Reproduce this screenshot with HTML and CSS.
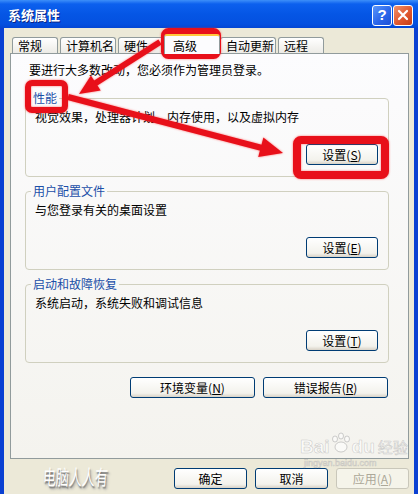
FILE: index.html
```html
<!DOCTYPE html>
<html>
    <head>
        <title>系统属性</title>
        <link rel="stylesheet" href="styles.css">
    </head>
    <body>
        <div class="window">
            <div class="titlebar">
                <span class="title">系统属性</span>
                <div class="capBtns">
                    <span class="capBtn helpBtn">?</span>
                    <span class="capBtn closeBtn">
                        <svg width="12" height="12" viewBox="0 0 12 12"><path d="M2 2L10 10M10 2L2 10" stroke="#fff" stroke-width="2.2" stroke-linecap="round"/></svg>
                    </span>
                </div>
            </div>

            <div class="frame">
                <div class="tabs">
                    <span class="tab">常规</span>
                    <span class="tab">计算机名</span>
                    <span class="tab">硬件</span>
                    <span class="tab active">高级</span>
                    <span class="tab">自动更新</span>
                    <span class="tab">远程</span>
                </div>

                <div class="panel">
                    <p class="note">要进行大多数改动，您必须作为管理员登录。</p>

                    <fieldset class="group">
                        <legend>性能</legend>
                        <p>视觉效果，处理器计划，内存使用，以及虚拟内存</p>
                        <div class="btnRow"><button class="btn">设置(<u>S</u>)</button></div>
                    </fieldset>

                    <fieldset class="group">
                        <legend>用户配置文件</legend>
                        <p>与您登录有关的桌面设置</p>
                        <div class="btnRow"><button class="btn">设置(<u>E</u>)</button></div>
                    </fieldset>

                    <fieldset class="group">
                        <legend>启动和故障恢复</legend>
                        <p>系统启动，系统失败和调试信息</p>
                        <div class="btnRow"><button class="btn">设置(<u>T</u>)</button></div>
                    </fieldset>

                    <div class="envRow">
                        <button class="btn wideBtn">环境变量(<u>N</u>)</button>
                        <button class="btn wideBtn">错误报告(<u>R</u>)</button>
                    </div>
                </div>

                <div class="footer">
                    <span class="brand">电脑人人有</span>
                    <button class="btn footBtn">确定</button>
                    <button class="btn footBtn">取消</button>
                    <button class="btn footBtn" disabled>应用(<u>A</u>)</button>
                </div>
            </div>

            <!-- red marks drawn on top of the screenshot -->
            <svg class="marks" width="418" height="494" viewBox="0 0 418 494">
                <g fill="none" stroke="#e8101a" stroke-linejoin="round">
                    <rect x="164.5" y="31.5" width="53" height="24" rx="4" stroke-width="7"/>
                    <rect x="28" y="83" width="37" height="27" rx="4" stroke-width="6"/>
                    <rect x="297" y="140" width="88" height="35" rx="4" stroke-width="8"/>
                    <line x1="160" y1="42" x2="95" y2="83.5" stroke-width="6"/>
                    <line x1="68" y1="97" x2="262" y2="148" stroke-width="6"/>
                </g>
                <g fill="#e8101a">
                    <polygon points="79,94 100.7,90.6 90.9,75.6"/>
                    <polygon points="283,153 258.2,157 263.4,137.6"/>
                </g>
            </svg>

            <div class="baidu">
                <div class="baiduLogo">
                    <span>Bai</span>
                    <svg width="22" height="24" viewBox="0 0 22 24">
                        <g fill="rgba(255,255,255,0.55)" stroke="rgba(160,160,160,0.5)">
                            <ellipse cx="5" cy="7" rx="2.5" ry="3"/>
                            <ellipse cx="11" cy="4" rx="2.5" ry="3"/>
                            <ellipse cx="17" cy="7" rx="2.5" ry="3"/>
                            <ellipse cx="11" cy="15" rx="6" ry="5"/>
                        </g>
                    </svg>
                    <span>du</span>
                    <span class="jy">经验</span>
                </div>
                <div class="baiduUrl">jingyan.baidu.com</div>
            </div>
        </div>
    </body>
</html>
```

FILE: styles.css
```css
body{
    margin:0;
    font-family:"Noto Sans CJK SC","Noto Sans",sans-serif;
    font-size:12px;
    line-height:16px;
    color:#000;
}
.window{
    position:relative;
    width:418px;
    height:494px;
    overflow:hidden;
    background:#0a40d2;
    display:flex;
    flex-direction:column;
}
.titlebar{
    height:28px;
    flex:none;
    display:flex;
    align-items:center;
    padding:0 5px 0 8px;
    background:linear-gradient(#3d8ff9 0, #0c60ee 4px, #0556e5 50%, #0450e0 85%, #0346d4 100%);
}
.title{
    flex:1;
    color:#fff;
    font-weight:bold;
    font-size:13px;
    text-shadow:1px 1px #0a2384;
    padding-top:1px;
}
.capBtns{
    display:flex;
    gap:1px;
    margin-top:2px;
}
.capBtn{
    width:20px;
    height:21px;
    box-sizing:border-box;
    border:1px solid #fff;
    border-radius:3px;
    display:flex;
    align-items:center;
    justify-content:center;
    color:#fff;
    font-family:"Liberation Sans",sans-serif;
    font-weight:bold;
    font-size:15px;
}
.helpBtn{
    background:linear-gradient(135deg, #5a97fb, #2b66ea 55%, #1d4fd6);
}
.closeBtn{
    background:linear-gradient(135deg, #f0926c, #e0582f 55%, #c63d16);
}

.frame{
    flex:1;
    margin:0 4px;
    background:#ece9d8;
    padding:6px 5px 0 6px;
}
.tabs{
    display:flex;
    align-items:flex-end;
    gap:2px;
    margin-left:2px;
}
.tab{
    height:16px;
    box-sizing:border-box;
    min-width:46px;
    padding:0 1px 0 5px;
    border:1px solid #919b9c;
    border-bottom:none;
    border-radius:3px 3px 0 0;
    background:linear-gradient(#ffffff, #ecebe6);
    line-height:15px;
}
.tab.active{
    position:relative;
    z-index:1;
    height:20px;
    min-width:56px;
    margin:0 -2px -1px;
    padding-left:8px;
    line-height:19px;
    background:#fcfcfe;
    border-top:2px solid #ffc83c;
}
.panel{
    height:406px;
    box-sizing:border-box;
    border:1px solid #919b9c;
    background:linear-gradient(#fcfcfe, #f4f3ee);
    padding:8px 19px 0 14px;
}
.note{
    margin:0 0 12px 4px;
}
.group{
    margin:0 0 6px;
    border:1px solid #d0d0bf;
    border-radius:4px;
    padding:0 10px 11px 9px;
}
.group legend{
    margin-left:-4px;
    padding:0 2px;
    color:#1a4fa8;
}
.group p{
    margin:3px 0 0;
}
.btnRow{
    display:flex;
    justify-content:flex-end;
    margin-top:19px;
}
.btn{
    height:21px;
    width:72px;
    box-sizing:border-box;
    padding:0;
    border:1px solid #003c74;
    border-radius:3px;
    background:linear-gradient(#ffffff, #f3f2ec 80%, #d8d2c6);
    font-family:"Noto Sans CJK SC","Noto Sans",sans-serif;
    font-size:12px;
    line-height:18px;
    color:#000;
}
.btn u{
    text-underline-offset:1px;
}
.envRow{
    display:flex;
    justify-content:flex-end;
    gap:8px;
    margin-top:14px;
    padding-right:1px;
}
.wideBtn{
    width:125px;
}
.footer{
    display:flex;
    align-items:center;
    gap:8px;
    margin-top:9px;
}
.footBtn{
    width:73px;
}
.footBtn:disabled{
    border-color:#c9c7ba;
    color:#aca899;
    background:#f5f4ea;
}
.brand{
    margin:-4px auto 0 33px;
    color:#fff;
    font-size:13px;
    transform:scaleY(1.6) skewX(-6deg);
    text-shadow:1px 1px 1px #777, 2px 2px 2px #aaa;
}

.marks{
    position:absolute;
    left:0;
    top:0;
    pointer-events:none;
    filter:drop-shadow(0 0 1px rgba(255,40,40,0.6));
}
.baidu{
    position:absolute;
    left:300px;
    top:432px;
    pointer-events:none;
    color:rgba(255,255,255,0.55);
    -webkit-text-stroke:0.6px rgba(150,150,150,0.45);
}
.baiduLogo{
    display:flex;
    align-items:flex-end;
    font-family:"Liberation Sans",sans-serif;
    font-weight:bold;
    font-size:19px;
    line-height:22px;
}
.baiduLogo svg{
    margin-bottom:2px;
}
.jy{
    font-family:"Noto Sans CJK SC",sans-serif;
    font-weight:normal;
    font-size:15px;
    margin-left:3px;
}
.baiduUrl{
    font-family:"Liberation Sans",sans-serif;
    font-size:9px;
    line-height:9px;
    margin:1px 0 0 4px;
}
```
